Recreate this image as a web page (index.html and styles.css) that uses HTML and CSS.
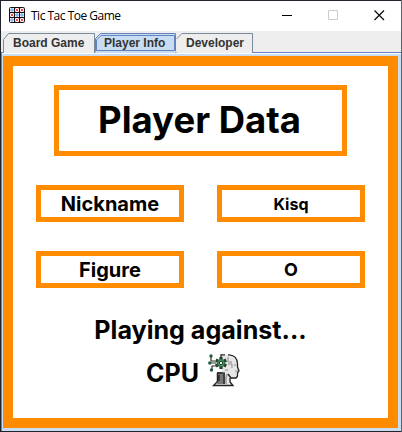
FILE: index.html
```html
<!DOCTYPE html>
<html lang="en">
<head>
<meta charset="utf-8">
<title>Tic Tac Toe Game</title>
<link rel="stylesheet" href="styles.css">
</head>
<body>
<div class="window">
  <header class="titlebar">
    <svg class="app-icon" width="18" height="18" viewBox="0 0 18 18">
      <rect x="1.5" y="1.5" width="15" height="15" rx="1" fill="#fff" stroke="#111"/>
      <path d="M6.500 1v16M11.500 1v16M1 6.500h16M1 11.500h16" stroke="#111" fill="none"/>
      <g fill="#fff" stroke="#4a90ea" stroke-width="1">
        <circle cx="4" cy="4" r="1.200"/><circle cx="9" cy="9" r="1.200"/><circle cx="14" cy="9" r="1.200"/><circle cx="4" cy="14" r="1.200"/>
      </g>
      <path d="M7.500 2.500l3 3m0-3l-3 3M12.500 2.500l3 3m0-3l-3 3M2.500 7.500l3 3m0-3l-3 3M7.500 12.500l3 3m0-3l-3 3M12.500 12.500l3 3m0-3l-3 3" stroke="#f0434c" fill="none"/>
    </svg>
    <span class="title">Tic Tac Toe Game</span>
    <div class="controls">
      <svg width="11" height="11" viewBox="0 0 11 11"><path d="M0 5.500h10" stroke="#000"/></svg>
      <svg width="11" height="11" viewBox="0 0 11 11"><path d="M.5 .5h9v9h-9z" stroke="#ccc" fill="none"/></svg>
      <svg width="11" height="11" viewBox="0 0 11 11"><path d="M.5 .5l9.500 9.500M10 .5L.5 10" stroke="#000" stroke-width="1.100"/></svg>
    </div>
  </header>
  <nav class="tabs">
    <div class="tab tab-board">
      <svg class="outline" width="94" height="20" viewBox="0 0 94 20"><path d="M.5 20V6.500l5-6H91.500V20" fill="#eee" stroke="#7a8a99"/></svg>
      <span>Board Game</span>
    </div>
    <div class="tab tab-player">
      <svg class="outline" width="82" height="20" viewBox="0 0 82 20"><path d="M.5 20V5.500l5-5H80.500V20z" fill="#c8ddf2"/><path d="M.5 18.500V5.500l5-5H80.500V18" fill="none" stroke="#6382bf"/><path d="M1.500 17.500V7l4.500-4.500H79.500V17.500z" fill="none" stroke="#6382bf"/></svg>
      <span>Player Info</span>
    </div>
    <div class="tab tab-developer">
      <svg class="outline" width="78" height="20" viewBox="0 0 78 20"><path d="M.5 20V6L6 .5H76.500V20" fill="#eee"/><path d="M.5 6L6 .5H76.500V20" fill="none" stroke="#7a8a99"/></svg>
      <span>Developer</span>
    </div>
  </nav>
  <main class="pane">
    <section class="panel">
      <h1 class="box heading">Player Data</h1>
      <div class="fields">
        <div class="box label">Nickname</div>
        <div class="box value nick">Kisq</div>
        <div class="box label">Figure</div>
        <div class="box value figure">O</div>
      </div>
      <div class="against">Playing against...</div>
      <div class="opponent">
        <span class="name">CPU</span>
        <svg width="32" height="34" viewBox="0 0 32 34">
          <path d="M13 2h8c6 0 9 4 9 9v4l1 4-1 2v3l-2 2h-5v3l2 2v1H6l2-2V20l6-1z" fill="#e6e6e6"/>
          <path d="M10 19h7v12H9z" fill="#777"/>
          <path d="M19 21l-1 4v6" stroke="#aaa" stroke-width="2" fill="none"/>
          <path d="M13 4V1.800h4M20 1.800c6-.3 9.500 3.500 9.500 9v3l1.500 4-1.500 2v3.500L28 25h-5l-3-4M22 25v4l3 3.500H5.500l4-4V20h5M16 20v11M11 22v6" fill="none" stroke="#222" stroke-width="1.300"/>
          <path d="M3 4v4h4M2 10h6M4 16v-3h4" stroke="#333" fill="none" stroke-width="1.200"/>
          <g fill="#245c3d"><circle cx="3" cy="3" r="1.700"/><circle cx="1.800" cy="10" r="1.700"/><circle cx="3.500" cy="17" r="1.700"/></g>
          <path d="M13 4v12M7.800 7l10.400 6M7.800 13l10.400-6" stroke="#203f2d" stroke-width="3.200"/>
          <circle cx="13" cy="10" r="3.500" fill="#4b9868" stroke="#34704c"/>
          <circle cx="13" cy="10" r="1.700" fill="#eee" stroke="#203f2d"/>
          <path d="M20 4v5h4M20 11h4v4M17 17h3M26 12h2M27 18h3" stroke="#8b8b8b" fill="none"/>
        </svg>
      </div>
    </section>
  </main>
</div>
</body>
</html>
```
FILE: styles.css
```css
* { box-sizing: border-box; }
body {
  margin: 0;
  width: 402px;
  height: 432px;
  overflow: hidden;
  background: linear-gradient(90deg, #20242c 50%, #59636c 50%);
  font-family: Inter, sans-serif;
  color: #000;
}
.window {
  width: 400px;
  height: 430px;
  margin: 1px;
  display: flex;
  flex-direction: column;
  background: #eee;
  box-shadow: 0 -1px #20242c, 0 1px #20242c;
}
.titlebar {
  height: 30px;
  flex: none;
  display: flex;
  align-items: center;
  padding-left: 7px;
  background: #fff;
}
.app-icon {
  flex: none;
  margin-bottom: 2px;
}
.title {
  margin-left: 5px;
  font: 12px/18px "Open Sans", sans-serif;
  letter-spacing: -.5px;
  white-space: nowrap;
}
.controls {
  margin: 0 16px 0 auto;
  display: flex;
  gap: 35px;
  padding-bottom: 1px;
}
.controls svg { display: block; }
.tabs {
  height: 21px;
  flex: none;
  display: flex;
  align-items: flex-start;
  padding: 2px 0 0 2px;
}
.tab {
  position: relative;
  height: 19px;
  font: bold 12px/20px "Liberation Sans", sans-serif;
  color: #333;
  white-space: nowrap;
}
.tab span { position: relative; }
.outline { position: absolute; left: 0; top: 0; }
.tab-board { width: 92px; padding-left: 10px; }
.tab-player { width: 81px; padding-left: 9px; z-index: 1; }
.tab-developer { width: 78px; padding-left: 10px; }
.pane {
  flex: 1;
  padding: 3px 3px 2px 1px;
  border: solid #6382bf;
  border-width: 1px 0 0 1px;
  background: #c8ddf2;
  box-shadow: inset 0 1px #fff;
}
.panel {
  height: 372px;
  border: 10px solid #ff8c00;
  background: #fff;
  display: flex;
  flex-direction: column;
  align-items: flex-start;
  padding: 19px 23px 0;
}
.box {
  margin: 0;
  border: 5px solid #ff8c00;
  display: flex;
  align-items: center;
  justify-content: center;
  font-weight: bold;
}
.heading {
  width: 293px;
  height: 71px;
  margin-left: 18px;
  padding: 0 2px 1px 0;
  font-size: 36.5px;
}
.fields {
  display: grid;
  grid-template-columns: 148px 148px;
  grid-auto-rows: 37px;
  gap: 29px 33px;
  margin-top: 29px;
}
.label { font-size: 20px; }
.nick { font-size: 16px; }
.figure { font-size: 18px; }
.against {
  width: 100%;
  text-align: center;
  margin-top: 26px;
  font-size: 25.1px;
  line-height: 32px;
  font-weight: bold;
}
.opponent {
  margin: 4px 0 0 110px;
  display: flex;
  align-items: center;
  gap: 9px;
  font-size: 25px;
  line-height: 34px;
  font-weight: bold;
}
.name { padding-top: 6px; }
```
